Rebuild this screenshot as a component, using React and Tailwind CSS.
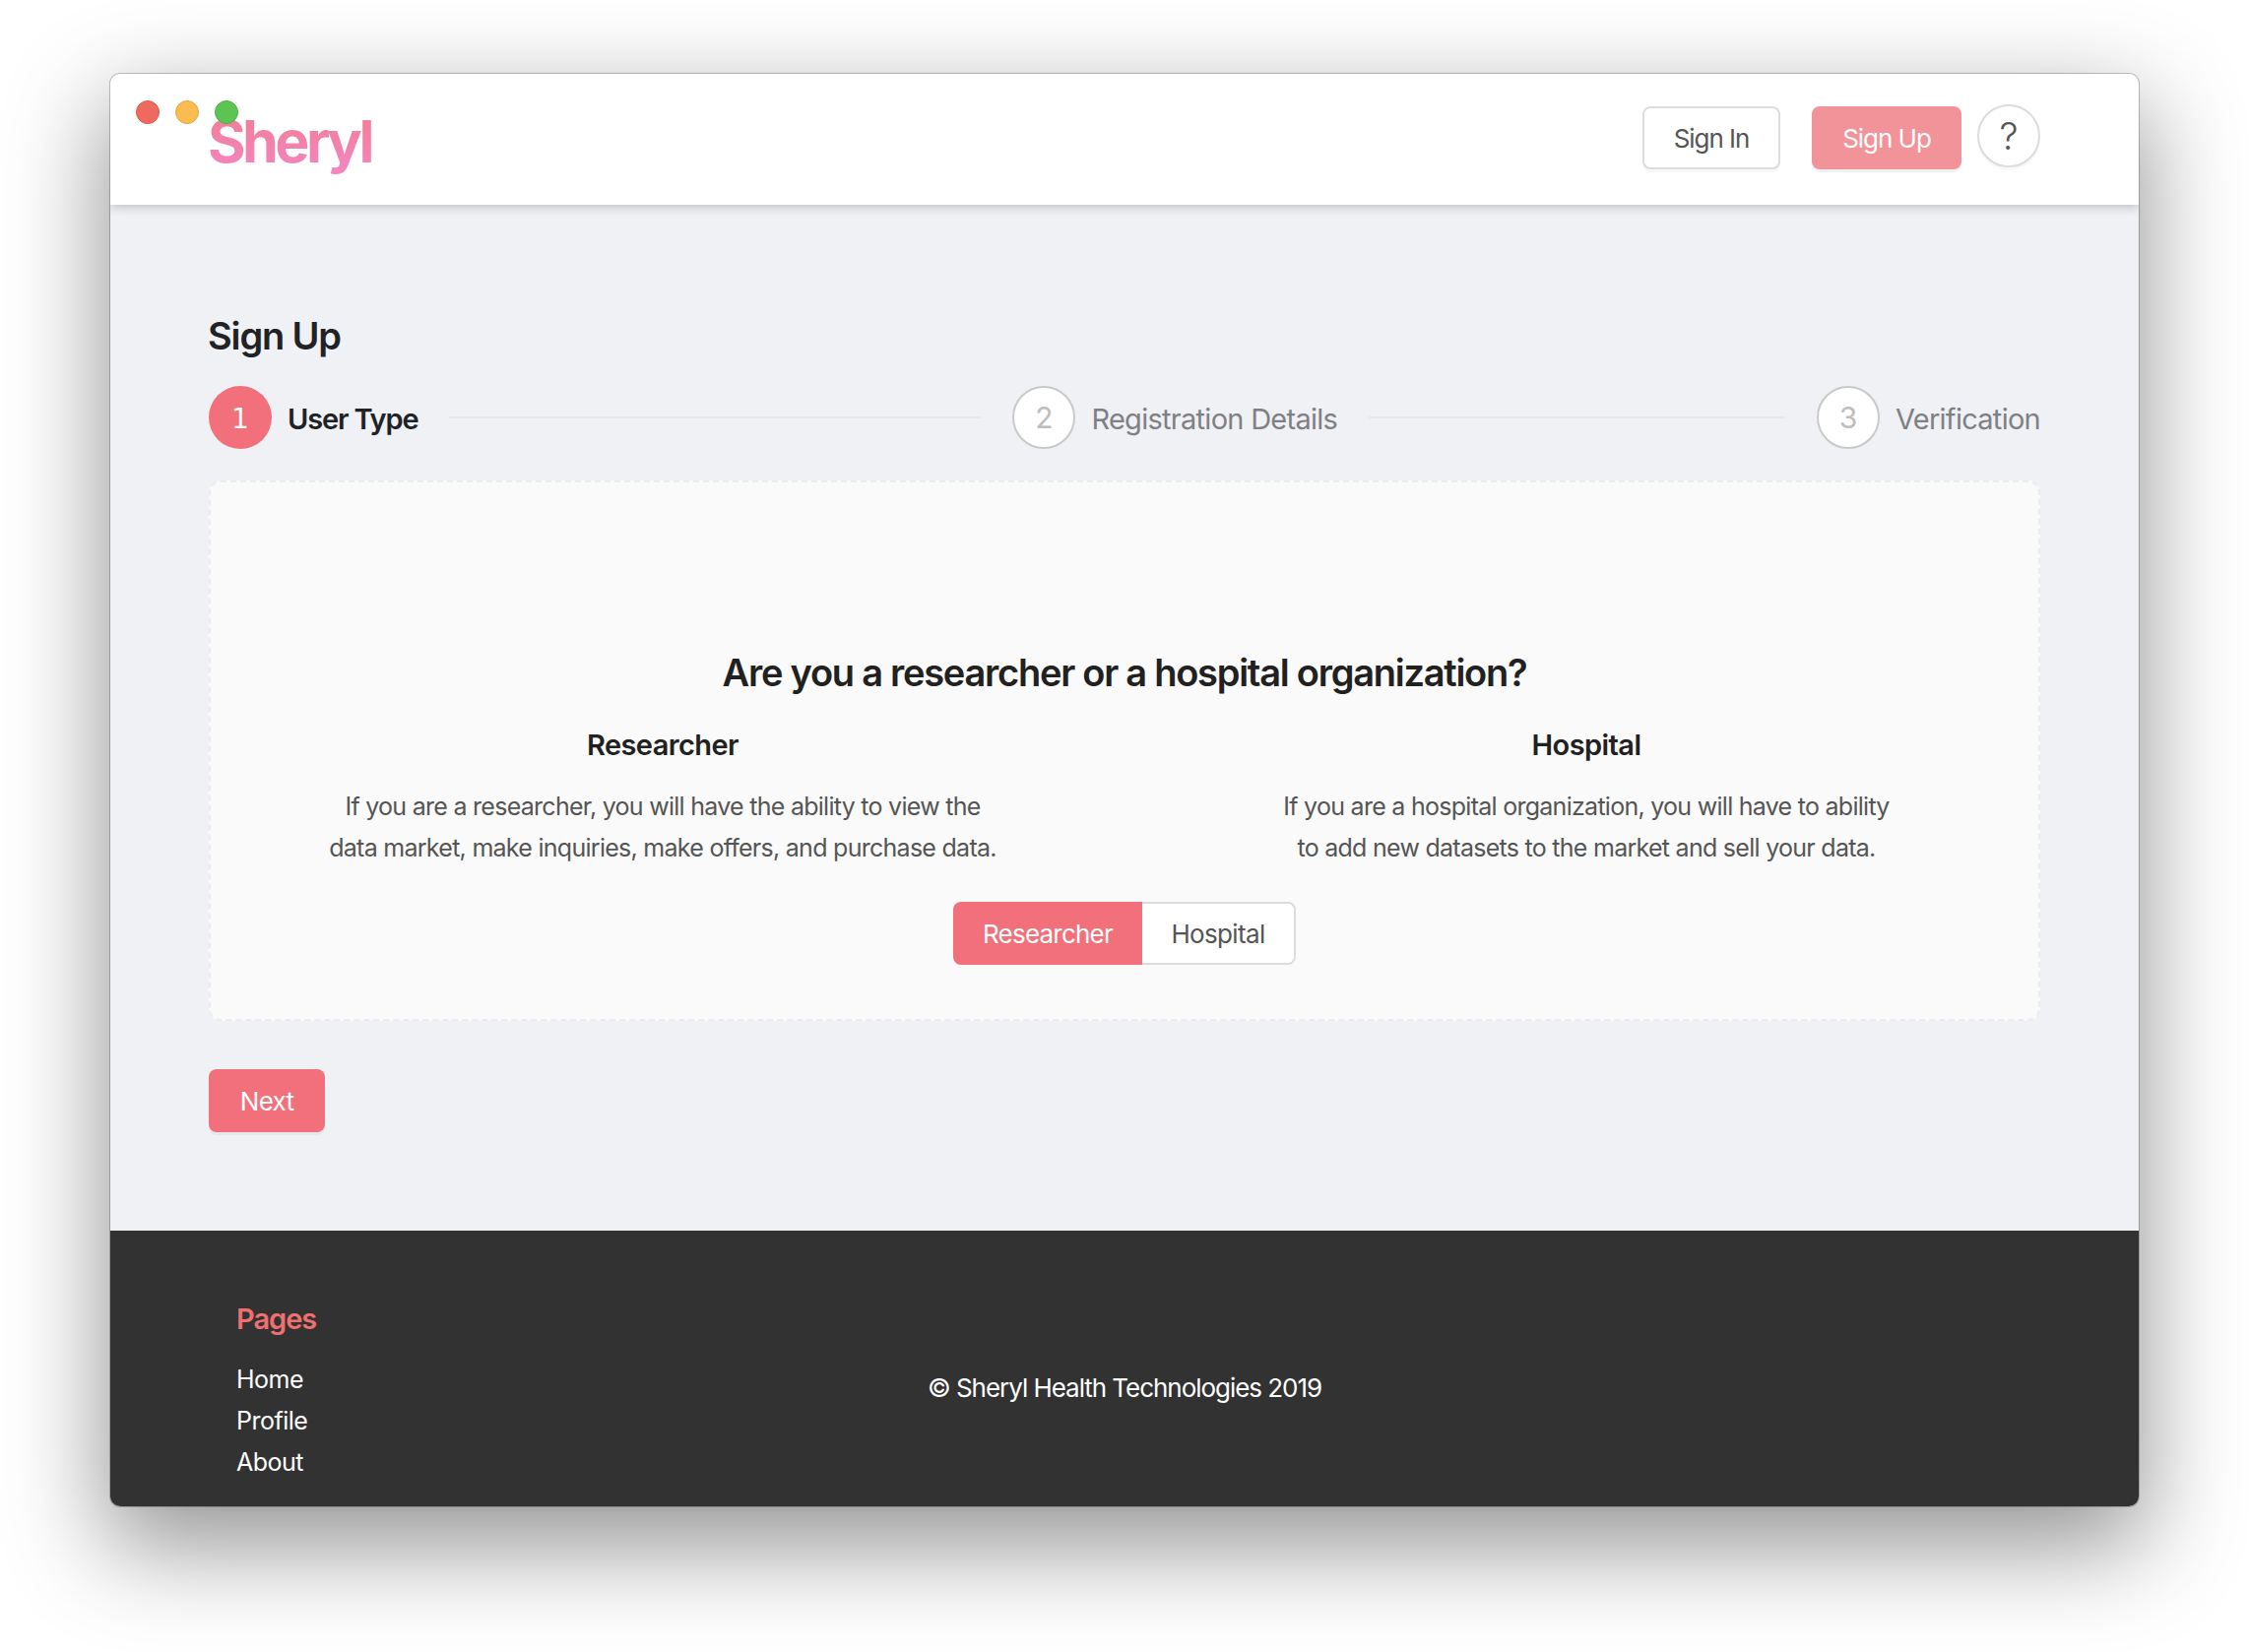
function Step({ num, label, active }) {
  return (
    <div className="flex items-center gap-4 shrink-0">
      <div
        className={
          active
            ? 'w-16 h-16 pt-[3px] rounded-full bg-[#f1707b] text-white flex items-center justify-center text-[28px] font-[DejaVu_Sans]'
            : 'w-16 h-16 pt-px rounded-full border-2 border-[#c9c9c9] bg-white text-[#bdbdbd] flex items-center justify-center text-[30px]'
        }
      >
        {num}
      </div>
      <span
        className={
          active
            ? 'pt-[3px] text-[29px] font-semibold tracking-[-0.04em] text-[#212225]'
            : 'pt-[3px] text-[29px] tracking-[-0.025em] text-[#808084]'
        }
      >
        {label}
      </span>
    </div>
  )
}

function Option({ title, lines }) {
  return (
    <div className="w-[802px] text-center">
      <h3 className="text-[29px] leading-[40px] font-semibold tracking-[-0.02em] text-[#212121]">{title}</h3>
      <p className="mt-[21px] text-[25px] leading-[42px] tracking-[-0.029em] text-[#555555]">
        {lines[0]}
        <br />
        {lines[1]}
      </p>
    </div>
  )
}

export default function App() {
  return (
    <div className="min-h-[1678px] bg-white pt-[75px] pl-[112px] font-[Inter]">
      <div className="relative w-[2060px] h-[1455px] flex flex-col rounded-[10px] overflow-hidden shadow-[0_0_0_1px_rgba(0,0,0,0.22),0_36px_100px_6px_rgba(0,0,0,0.42)]">
        <header className="relative z-10 h-[133px] shrink-0 bg-white shadow-[0_2px_10px_rgba(0,0,0,0.22)] flex items-center pl-[99px] pr-[100px]">
          <div className="text-[59px] leading-none font-bold tracking-[-0.06em] bg-gradient-to-b from-[#f07e8e] to-[#f584c2] bg-clip-text text-transparent pt-[7px] pb-1">
            Sheryl
          </div>
          <div className="ml-auto -mt-[3px] flex items-start">
            <button className="w-[140px] h-16 rounded-lg border-2 border-[#dcdcdc] bg-white text-[26px] tracking-[-0.04em] text-[#555555] shadow-[0_3px_0_rgba(0,0,0,0.03)]">
              Sign In
            </button>
            <button className="ml-8 w-[152px] h-16 rounded-lg bg-[#f29399] text-[26px] tracking-[-0.04em] text-white shadow-[0_3px_0_rgba(0,0,0,0.05)]">
              Sign Up
            </button>
            <button className="-mt-0.5 ml-4 w-[64px] h-[64px] rounded-full border-2 border-[#dcdcdc] bg-white text-[38px] font-light text-[#555555] flex items-center justify-center shadow-[0_3px_0_rgba(0,0,0,0.03)]">
              ?
            </button>
          </div>
        </header>

        <main className="flex-1 bg-[#f0f1f5] pt-[108px] px-[100px]">
          <h1 className="-ml-px text-[38px] leading-[50px] font-semibold tracking-[-0.03em] text-[#212225]">Sign Up</h1>
          <div className="mt-[26px] flex items-center gap-8">
            <Step num="1" label="User Type" active />
            <div className="grow-[539] basis-0 h-0.5 bg-[#e7e8ea]" />
            <Step num="2" label="Registration Details" />
            <div className="grow-[422] basis-0 h-0.5 bg-[#e7e8ea]" />
            <Step num="3" label="Verification" />
          </div>
          <section className="mt-8 h-[549px] rounded-xl border-2 border-dashed border-[#ececee] bg-[#fafafa] pt-[168px] px-[58px]">
            <h2 className="text-center text-[38px] leading-[50px] font-semibold tracking-[-0.033em] text-[#212121]">
              Are you a researcher or a hospital organization?
            </h2>
            <div className="mt-[29px] flex justify-between">
              <Option
                title="Researcher"
                lines={[
                  'If you are a researcher, you will have the ability to view the',
                  'data market, make inquiries, make offers, and purchase data.',
                ]}
              />
              <Option
                title="Hospital"
                lines={[
                  'If you are a hospital organization, you will have to ability',
                  'to add new datasets to the market and sell your data.',
                ]}
              />
            </div>
            <div className="mt-[34px] flex justify-center">
              <button className="w-[192px] h-16 rounded-l-lg bg-[#f1707b] text-[26px] tracking-[-0.03em] text-white">
                Researcher
              </button>
              <button className="w-[156px] h-16 rounded-r-lg border-2 border-l-0 border-[#dcdcdc] bg-white text-[26px] tracking-[-0.025em] text-[#555555]">
                Hospital
              </button>
            </div>
          </section>
          <button className="mt-[49px] w-[118px] h-16 rounded-lg bg-[#f1707b] text-[26px] tracking-[-0.03em] text-white shadow-[0_3px_0_rgba(0,0,0,0.04)]">
            Next
          </button>
        </main>

        <footer className="relative h-[280px] shrink-0 bg-[#323232] pt-[70px] pl-[128px]">
          <h4 className="text-[29px] leading-10 font-semibold tracking-[-0.035em] text-[#ee7070]">Pages</h4>
          <ul className="mt-[20px] text-[25px] leading-[42px] tracking-[-0.02em] text-white">
            <li>Home</li>
            <li>Profile</li>
            <li>About</li>
          </ul>
          <p className="absolute left-0 right-0 top-[139px] text-center text-[26px] leading-[42px] tracking-[-0.04em] text-white">
            © Sheryl Health Technologies 2019
          </p>
        </footer>

        <div className="absolute z-20 left-[26px] top-[27px] flex gap-4">
          <span className="w-6 h-6 rounded-full bg-[#ef6a5e] border border-[#dc5a50]" />
          <span className="w-6 h-6 rounded-full bg-[#f8bd4e] border border-[#e2a63d]" />
          <span className="w-6 h-6 rounded-full bg-[#5cc551] border border-[#4fae45]" />
        </div>
      </div>
    </div>
  )
}
